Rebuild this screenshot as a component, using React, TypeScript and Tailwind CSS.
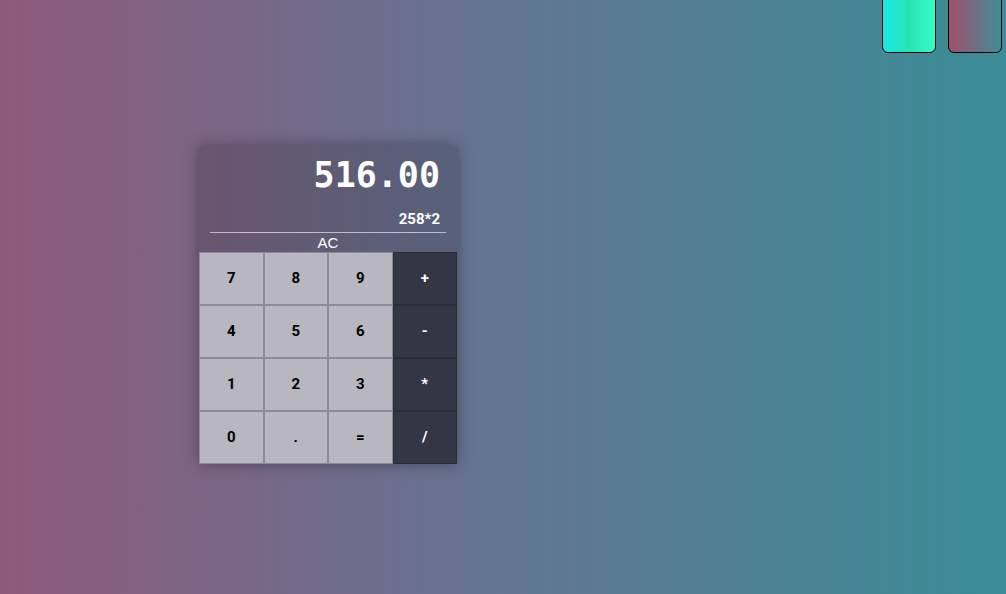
const keys = [
  ["7", "8", "9", "+"],
  ["4", "5", "6", "-"],
  ["1", "2", "3", "*"],
  ["0", ".", "=", "/"],
];

export default function App() {
  return (
    <div className="relative w-full h-[594px] overflow-hidden bg-[linear-gradient(to_right,#8e5a7b,#627592_50%,#3a8c96)] font-['Liberation_Sans',Arial,sans-serif]">
      {/* theme switchers */}
      <div className="absolute top-[-6px] right-[4px] flex gap-[12px]">
        <button className="w-[54px] h-[59px] rounded-[6px] border border-black bg-[linear-gradient(to_right,#12ece6,#2ae3b3_50%,#38fcc6)]"></button>
        <button className="w-[54px] h-[59px] rounded-[6px] border border-black bg-[linear-gradient(to_right,#a24f6b,#3f8e97)]"></button>
      </div>

      <div className="pt-[146px] pl-[199px]">
        <div className="w-[258px] shadow-[0_0_14px_rgba(0,0,0,0.35)]">
          <div className="bg-black/15 pt-[5px] flex flex-col">
            <div className="text-right pr-[17px] text-white font-bold text-[35px] leading-[48px] font-['DejaVu_Sans_Mono',monospace]">
              516.00
            </div>
            <div className="text-right pr-[17px] mt-[10px] text-white font-bold text-[15px] leading-[20px] font-['Roboto',sans-serif]">
              258*2
            </div>
            <div className="mx-[11px] mt-[3px] h-px bg-white/60"></div>
            <button className="text-white text-[15px] leading-[19px] text-center">AC</button>
          </div>
          <div className="grid grid-cols-4">
            {keys.map((row) =>
              row.map((k, i) => (
                <button
                  key={k}
                  className={
                    i === 3
                      ? "h-[53px] bg-[#333743] border border-[#292c35] text-white font-bold text-[15px] font-['Roboto',sans-serif]"
                      : "h-[53px] bg-[#b8b6c1] border border-[#8c8a95] text-black font-bold text-[15px] font-['Roboto',sans-serif]"
                  }
                >
                  {k}
                </button>
              ))
            )}
          </div>
        </div>
      </div>
    </div>
  );
}
